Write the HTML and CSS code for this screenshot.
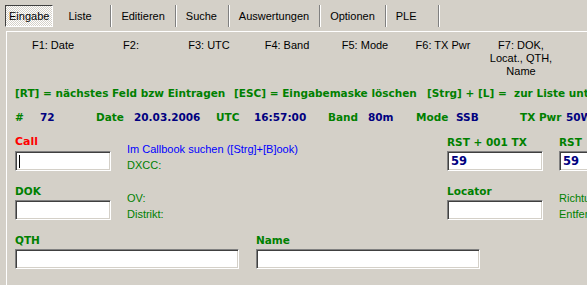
FILE: index.html
```html
<!DOCTYPE html>
<html lang="de">
<head>
  <meta charset="UTF-8">
  <title>Eingabe</title>
  <link rel="stylesheet" href="styles.css">
</head>
<body>
  <div class="tabs">
    <div class="tab active">Eingabe</div>
    <div class="tab">Liste</div>
    <div class="tab">Editieren</div>
    <div class="tab">Suche</div>
    <div class="tab">Auswertungen</div>
    <div class="tab">Optionen</div>
    <div class="tab">PLE</div>
  </div>

  <div class="panel">
    <div class="fkeys">
      <div>F1: Date</div>
      <div>F2:</div>
      <div>F3: UTC</div>
      <div>F4: Band</div>
      <div>F5: Mode</div>
      <div>F6: TX Pwr</div>
      <div>F7: DOK,<br>Locat., QTH,<br>Name</div>
    </div>

    <div class="help">
      <span>[RT] = nächstes Feld bzw Eintragen</span>
      <span>[ESC] = Eingabemaske löschen</span>
      <span>[Strg] + [L] = &nbsp;zur Liste unter</span>
    </div>

    <div class="status">
      <span class="key">#</span><span class="val">72</span>
      <span class="key">Date</span><span class="val">20.03.2006</span>
      <span class="key">UTC</span><span class="val">16:57:00</span>
      <span class="key">Band</span><span class="val">80m</span>
      <span class="key">Mode</span><span class="val">SSB</span>
      <span class="key">TX Pwr</span><span class="val">50W</span>
    </div>

    <div class="row">
      <div class="item">
        <div class="label red">Call</div>
        <div class="field"><span class="caret"></span></div>
      </div>
      <div class="info">
        <div class="blue">Im Callbook suchen ([Strg]+[B]ook)</div>
        <div>DXCC:</div>
      </div>
      <div class="item">
        <div class="label">RST + 001 TX</div>
        <div class="field">59</div>
      </div>
      <div class="item">
        <div class="label">RST</div>
        <div class="field">59</div>
      </div>
    </div>

    <div class="row">
      <div class="item">
        <div class="label">DOK</div>
        <div class="field"></div>
      </div>
      <div class="info">
        <div>OV:</div>
        <div>Distrikt:</div>
      </div>
      <div class="item">
        <div class="label">Locator</div>
        <div class="field"></div>
      </div>
      <div class="info">
        <div>Richtu</div>
        <div>Entfer</div>
      </div>
    </div>

    <div class="row wide">
      <div class="item">
        <div class="label">QTH</div>
        <div class="field"></div>
      </div>
      <div class="item">
        <div class="label">Name</div>
        <div class="field"></div>
      </div>
    </div>
  </div>
</body>
</html>
```

FILE: styles.css
```css
body {
  margin: 0;
  width: 587px;
  height: 285px;
  overflow: hidden;
  background-color: #d4d0c8;
  font-family: "Liberation Sans", Arial, sans-serif;
  font-size: 11px;
  color: #000;
}

/* Reiterleiste */
.tabs {
  display: flex;
  align-items: center;
  height: 31px;
  padding-left: 5px;
  box-sizing: border-box;
}
.tab {
  min-width: 32px;
  height: 22px;
  line-height: 22px;
  padding: 0 10px;
  border-right: 1px solid #808080;
  box-shadow: 1px 0 0 #fff;
  white-space: nowrap;
}
.tab.active {
  min-width: 0;
  height: 20px;
  line-height: 20px;
  padding: 0 3px;
  margin-right: 5px;
  border: 1px solid;
  border-color: #404040 #fff #fff #404040;
  box-shadow: none;
  background: repeating-conic-gradient(#fff 0 25%, #d4d0c8 0 50%) 0 0 / 2px 2px;
}

/* Eingabemaske */
.panel {
  box-sizing: border-box;
  margin-left: 6px;
  border-top: 1px solid #fff;
  border-left: 1px solid #fff;
  padding: 7px 0 0 8px;
  width: 581px;
  height: 254px;
  overflow: hidden;
}

.fkeys {
  display: grid;
  grid-template-columns: repeat(7, 78px);
  margin-left: -1px;
  text-align: center;
  line-height: 13px;
}

.help, .status {
  display: grid;
  white-space: nowrap;
  font-family: "DejaVu Sans", Verdana, sans-serif;
  font-size: 10.5px;
  font-weight: bold;
  line-height: 14px;
  color: #008000;
}
.help {
  grid-template-columns: 219px 193px auto;
  margin-top: 8px;
}
.status {
  grid-template-columns: 25px 56px 38px 82px 38px 74px 40px 48px 40px 64px 46px auto;
  margin-top: 10px;
}
.status .val {
  color: #000080;
}

.row {
  display: grid;
  grid-template-columns: 112px 320px 112px 112px;
  margin-top: 11px;
}
.row.wide {
  grid-template-columns: 241px 224px;
}
.label {
  font-family: "DejaVu Sans", Verdana, sans-serif;
  font-size: 10.5px;
  font-weight: bold;
  line-height: 14px;
  margin-bottom: 2px;
  color: #008000;
  white-space: nowrap;
}
.label.red {
  color: #ff0000;
  font-size: 11px;
}
.field {
  height: 20px;
  box-sizing: border-box;
  border: 1px solid;
  border-color: #808080 #fff #fff #808080;
  box-shadow: inset 1px 1px 0 #404040, inset -1px -1px 0 #d4d0c8;
  background-color: #fff;
  padding: 2px 3px 0;
  font-family: "DejaVu Sans", Verdana, sans-serif;
  font-weight: bold;
  font-size: 11.5px;
  line-height: 15px;
  color: #000080;
}
.row .item .field {
  width: 96px;
}
.row.wide .item .field {
  width: 224px;
}
.caret {
  display: inline-block;
  width: 1px;
  height: 13px;
  margin-top: 1px;
  background-color: #000;
}
.info {
  padding-top: 6px;
  line-height: 16px;
  color: #008000;
  white-space: nowrap;
}
.blue {
  color: #0000ff;
}
```
